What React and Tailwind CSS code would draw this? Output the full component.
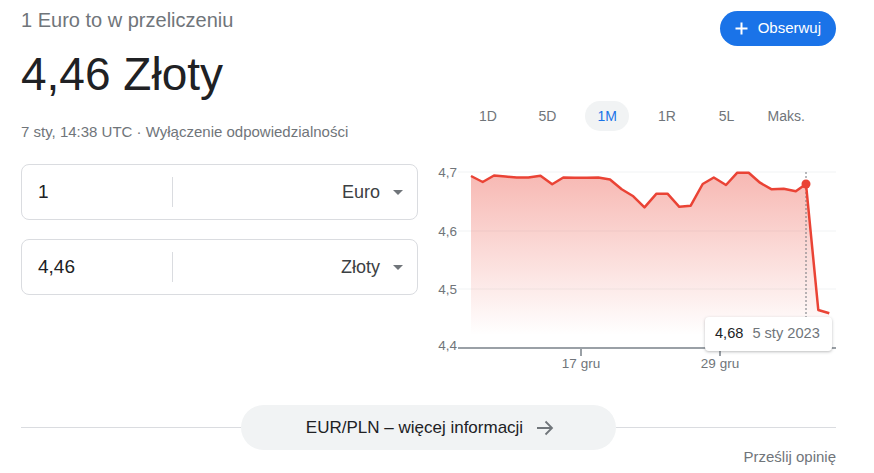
import React from 'react';

// chart points in svg coordinates (x, y)
const points = [
  [41, 16], [52.7, 22], [64, 15.5], [75.5, 16.5], [86.7, 17.5], [98.3, 17.5],
  [110.5, 15.8], [122.2, 24.2], [133.3, 17.5], [145, 17.8], [156.7, 17.7],
  [168.3, 17.5], [180, 19.5], [191.7, 29.3], [203.3, 36.3], [214.5, 47.3],
  [226.5, 33.7], [237.5, 33.7], [249.3, 46.8], [260.7, 45.7], [272.7, 24],
  [283.8, 17.5], [296, 25], [307.3, 12.7], [318.7, 12.7], [330, 22.7],
  [341.7, 29.3], [353.7, 28.8], [365.8, 31.3], [376, 24], [388.3, 150],
  [399.3, 153.3],
];

const ranges = ['1D', '5D', '1M', '1R', '5L', 'Maks.'];

const yLabels = [
  { label: '4,7', y: 12 },
  { label: '4,6', y: 71 },
  { label: '4,5', y: 129 },
];

const CurrencyBox = ({ amount, currency }) => (
  <div className="flex items-center h-[56px] border border-[#dadce0] rounded-[8px] pl-[16px] pr-[14px]">
    <div className="w-[134px] text-[19px] text-[#202124]">{amount}</div>
    <div className="w-px h-[30px] bg-[#dadce0]" />
    <div className="flex-1 flex items-center justify-end gap-[13px] text-[18px] text-[#3c4043]">
      <span>{currency}</span>
      <span className="w-0 h-0 border-l-[5px] border-r-[5px] border-t-[5px] border-l-transparent border-r-transparent border-t-[#70757a]" />
    </div>
  </div>
);

const RateChart = () => {
  const line = points.map(([x, y], i) => `${i ? 'L' : 'M'}${x} ${y}`).join(' ');
  const area = `${line} L399.3 188 L41 188 Z`;

  return (
    <div className="relative mt-[29px] w-[410px] h-[215px]">
      <svg width="410" height="215" className="block">
        <defs>
          <linearGradient id="fade" x1="0" y1="12" x2="0" y2="175" gradientUnits="userSpaceOnUse">
            <stop offset="0" stopColor="#ea4335" stopOpacity="0.38" />
            <stop offset="1" stopColor="#ea4335" stopOpacity="0" />
          </linearGradient>
        </defs>

        {yLabels.map((g) => (
          <g key={g.label}>
            <line x1="28" x2="406" y1={g.y} y2={g.y} stroke="#f1f3f4" strokeWidth="1" />
            <text x="27" y={g.y + 5} textAnchor="end" fontSize="13.5" fill="#70757a" fontFamily="'Liberation Sans', Arial, sans-serif">
              {g.label}
            </text>
          </g>
        ))}

        <path d={area} fill="url(#fade)" />

        <line x1="376" x2="376" y1="12" y2="157" stroke="#70757a" strokeWidth="1" strokeDasharray="2 2" />

        <path d={line} fill="none" stroke="#ea4335" strokeWidth="2.5" strokeLinejoin="round" />
        <circle cx="376" cy="24" r="4.5" fill="#ea4335" />

        <line x1="28" x2="406" y1="188" y2="188" stroke="#9aa0a6" strokeWidth="2" />
        <text x="27" y="190" textAnchor="end" fontSize="13.5" fill="#70757a" fontFamily="'Liberation Sans', Arial, sans-serif">4,4</text>

        <line x1="151" x2="151" y1="188" y2="196" stroke="#9aa0a6" strokeWidth="2" />
        <line x1="290" x2="290" y1="188" y2="196" stroke="#9aa0a6" strokeWidth="2" />
        <text x="151" y="208" textAnchor="middle" fontSize="13.5" fill="#70757a" fontFamily="'Liberation Sans', Arial, sans-serif">17 gru</text>
        <text x="290" y="208" textAnchor="middle" fontSize="13.5" fill="#70757a" fontFamily="'Liberation Sans', Arial, sans-serif">29 gru</text>
      </svg>

      <div className="absolute left-[275px] top-[157px] w-[127px] h-[34px] flex items-center gap-[9px] pl-[10px] bg-white rounded-[4px] shadow-[0_1px_3px_rgba(60,64,67,0.35)] text-[14.6px]">
        <span className="text-[#202124]">4,68</span>
        <span className="text-[#70757a]">5 sty 2023</span>
      </div>
    </div>
  );
};

export default function App() {
  return (
    <div className="w-[874px] h-[473px] bg-white font-['Liberation_Sans',Arial,sans-serif] pl-[21px] overflow-hidden">
      <div className="flex">
        {/* converter column */}
        <div className="w-[397px]">
          <div className="mt-[8px] text-[20px] leading-[24px] text-[#70757a]">1 Euro to w przeliczeniu</div>
          <div className="mt-[16px] text-[46px] leading-[52px] text-[#202124]">4,46 Złoty</div>
          <div className="mt-[22px] text-[15px] leading-[20px] text-[#70757a]">
            7 sty, 14:38 UTC · Wyłączenie odpowiedzialności
          </div>
          <div className="mt-[22px] flex flex-col gap-[19px]">
            <CurrencyBox amount="1" currency="Euro" />
            <CurrencyBox amount="4,46" currency="Złoty" />
          </div>
        </div>

        {/* chart column */}
        <div className="ml-[12px] w-[406px] flex flex-col">
          <div className="mt-[11px] flex justify-end">
            <button className="h-[35px] flex items-center gap-[10px] px-[15px] rounded-full bg-[#1a73e8] text-white text-[15px]">
              <svg width="13" height="13" viewBox="0 0 13 13">
                <path d="M6.5 0.5v12M0.5 6.5h12" stroke="white" strokeWidth="2" />
              </svg>
              Obserwuj
            </button>
          </div>
          <div className="mt-[55px] ml-[28px] w-[358px] grid grid-cols-6 h-[30px]">
            {ranges.map((r) => (
              <div key={r} className="flex justify-center items-center">
                <span
                  className={
                    r === '1M'
                      ? 'h-[30px] px-[12px] flex items-center rounded-full bg-[#f1f3f4] text-[#1a73e8] text-[14px]'
                      : 'h-[30px] flex items-center text-[#70757a] text-[14px]'
                  }
                >
                  {r}
                </span>
              </div>
            ))}
          </div>
          <RateChart />
        </div>
      </div>

      {/* more info link */}
      <div className="mt-[30px] w-[815px] flex items-center">
        <div className="flex-1 h-px bg-[#dadce0]" />
        <button className="w-[375px] h-[45px] flex items-center justify-center gap-[12px] pl-[4px] rounded-full bg-[#f1f3f4] text-[17px] text-[#202124]">
          EUR/PLN – więcej informacji
          <svg width="20" height="20" viewBox="0 0 20 20">
            <path d="M2 10h15M10.5 3.5L17 10l-6.5 6.5" fill="none" stroke="#70757a" strokeWidth="1.8" />
          </svg>
        </button>
        <div className="flex-1 h-px bg-[#dadce0]" />
      </div>
      <div className="w-[815px] flex justify-end -mt-[3px] text-[15px] leading-[20px] text-[#70757a]">Prześlij opinię</div>
    </div>
  );
}
